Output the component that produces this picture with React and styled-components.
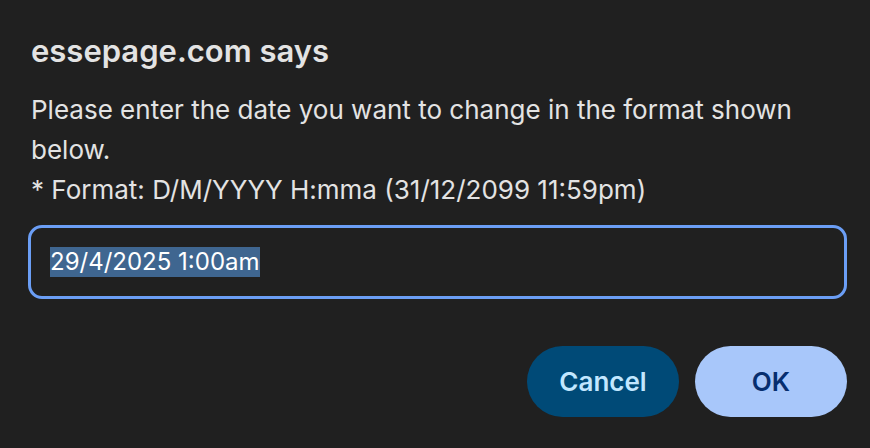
import React from "react";
import styled, { createGlobalStyle } from "styled-components";

const Global = createGlobalStyle`
  html, body { margin: 0; padding: 0; background: #202020; }
  body { font-family: Inter, "Noto Sans", sans-serif; -webkit-font-smoothing: antialiased; }
`;

const Dialog = styled.div`
  width: 870px;
  height: 448px;
  box-sizing: border-box;
  padding: 31px 23px 0 31px;
  background: #202020;
  display: flex;
  flex-direction: column;
`;

const Title = styled.h1`
  margin: 0;
  font-size: 31px;
  font-weight: 600;
  line-height: 40px;
  color: #e3e3e3;
`;

const Message = styled.p`
  margin: 19px 0 0;
  font-size: 26px;
  line-height: 40px;
  color: #e3e3e3;
  font-weight: 400;
`;

const Field = styled.div`
  margin: 15px 0 0 -3px;
  height: 74px;
  box-sizing: border-box;
  border: 3px solid #6b9ef5;
  border-radius: 14px;
  display: flex;
  align-items: center;
  padding: 0 19px;
  font-size: 24px;
  color: #ffffff;
`;

const Selection = styled.span`
  background: #3f6690;
  line-height: 30px;
`;

const Actions = styled.div`
  margin-top: 47px;
  display: flex;
  justify-content: flex-end;
  gap: 16px;
`;

const Button = styled.button`
  width: 152px;
  height: 71px;
  border: none;
  border-radius: 36px;
  font-family: inherit;
  font-size: 26px;
  font-weight: 600;
  background: ${(p) => (p.$primary ? "#a8c7fa" : "#004a77")};
  color: ${(p) => (p.$primary ? "#062e6f" : "#c2e7ff")};
  cursor: pointer;
`;

export default function App() {
  return (
    <>
      <Global />
      <Dialog>
        <Title>essepage.com says</Title>
        <Message>
          Please enter the date you want to change in the format shown below.
          <br />* Format: D/M/YYYY H:mma (31/12/2099 11:59pm)
        </Message>
        <Field>
          <Selection>29/4/2025 1:00am</Selection>
        </Field>
        <Actions>
          <Button>Cancel</Button>
          <Button $primary>OK</Button>
        </Actions>
      </Dialog>
    </>
  );
}
